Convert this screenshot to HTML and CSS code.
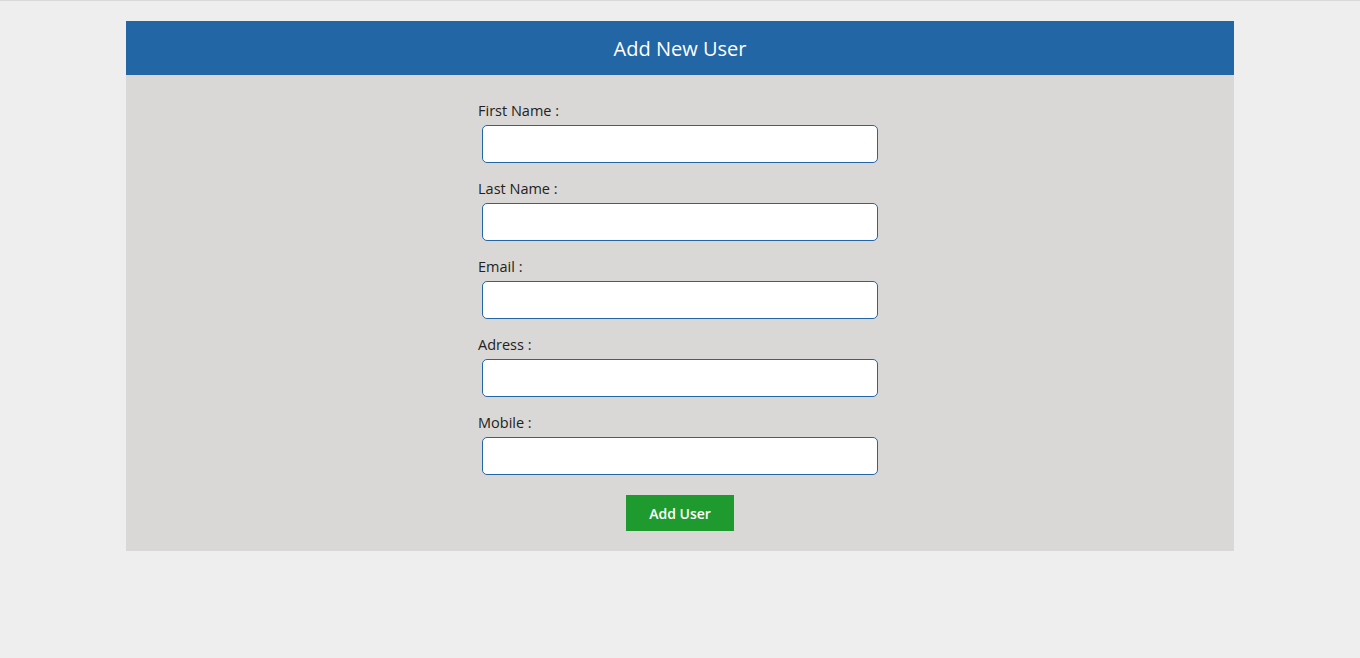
FILE: index.html
```html
<!DOCTYPE html>
<html>
<head>
<meta charset="utf-8">
<link rel="stylesheet" href="styles.css">
</head>
<body>
<div class="topline"></div>
<div class="card">
  <div class="card-header">Add New User</div>
  <form class="card-body">
    <div class="fields">
      <div class="field">
        <label>First Name :</label>
        <input type="text">
      </div>
      <div class="field">
        <label>Last Name :</label>
        <input type="text">
      </div>
      <div class="field">
        <label>Email :</label>
        <input type="text">
      </div>
      <div class="field">
        <label>Adress :</label>
        <input type="text">
      </div>
      <div class="field">
        <label>Mobile :</label>
        <input type="text">
      </div>
    </div>
    <button type="button" class="btn">Add User</button>
  </form>
</div>
</body>
</html>
```

FILE: styles.css
```css
html, body {
  margin: 0;
  padding: 0;
  background: #eeeeee;
  font-family: "Open Sans", "Noto Sans", sans-serif;
}
.topline {
  height: 1px;
  background: #d9d9d9;
}
.card {
  width: 1108px;
  margin: 20px auto 0;
}
.card-header {
  height: 54px;
  background: #2266a5;
  color: #ffffff;
  font-size: 20px;
  font-weight: 500;
  display: flex;
  align-items: center;
  justify-content: center;
}
.card-body {
  background: #d9d8d6;
  margin: 0;
  padding: 27px 0 20px;
  display: flex;
  flex-direction: column;
  align-items: center;
}
.fields {
  width: 404px;
  display: flex;
  flex-direction: column;
  gap: 17px;
}
.field {
  display: flex;
  flex-direction: column;
}
.field label {
  font-size: 14.5px;
  color: #222222;
  line-height: 18px;
  height: 23px;
}
.field input {
  box-sizing: border-box;
  margin-left: 4px;
  width: 396px;
  height: 38px;
  border: 1px solid #2266a5;
  border-radius: 5px;
  background: #ffffff;
  outline: none;
}
.btn {
  margin-top: 20px;
  width: 108px;
  height: 36px;
  border: none;
  background: #1f9a2e;
  color: #ffffff;
  font-family: inherit;
  font-size: 14px;
  font-weight: 600;
  cursor: pointer;
}
```
